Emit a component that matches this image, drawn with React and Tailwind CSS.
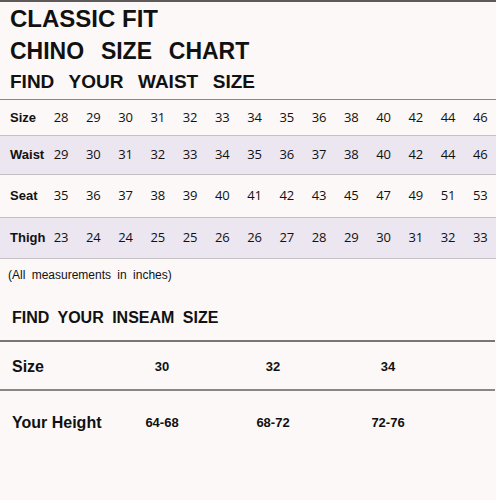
const waist = [
  { label: "Size", values: [28, 29, 30, 31, 32, 33, 34, 35, 36, 38, 40, 42, 44, 46], h: "h-[36px]", bg: "" },
  { label: "Waist", values: [29, 30, 31, 32, 33, 34, 35, 36, 37, 38, 40, 42, 44, 46], h: "h-[39px]", bg: "bg-[#ebe6f0]" },
  { label: "Seat", values: [35, 36, 37, 38, 39, 40, 41, 42, 43, 45, 47, 49, 51, 53], h: "h-[43px]", bg: "" },
  { label: "Thigh", values: [23, 24, 24, 25, 25, 26, 26, 27, 28, 29, 30, 31, 32, 33], h: "h-[41px]", bg: "bg-[#ebe6f0]" },
];

const inseam = [
  { label: "Size", values: ["30", "32", "34"], h: "h-[49px] pt-[3px]" },
  { label: "Your Height", values: ["64-68", "68-72", "72-76"], h: "h-[64px]" },
];

export default function App() {
  return (
    <div className="w-[496px] h-[500px] overflow-hidden bg-[#fbf8f7] text-[#111] border-t-2 border-[#5e5a5a] font-['Liberation_Sans',Arial,sans-serif]">
      <header className="pl-[10px] font-bold">
        <h1 className="text-[24px] leading-[32px] mt-[1px]">CLASSIC FIT</h1>
        <h2 className="text-[23px] leading-[32px] [word-spacing:2px]">CHINO&nbsp; SIZE&nbsp; CHART</h2>
        <h3 className="text-[19px] leading-[30px] [word-spacing:2px]">FIND&nbsp; YOUR&nbsp; WAIST&nbsp; SIZE</h3>
      </header>

      <div className="mt-[2px] border-t border-[#8a8686]">
        {waist.map((row) => (
          <div
            key={row.label}
            className={`grid grid-cols-[35px_repeat(14,32.25px)] items-center pl-[10px] border-b border-[#c4c0c4] ${row.h} ${row.bg}`}
          >
            <span className="font-bold text-[13px]">{row.label}</span>
            {row.values.map((v, i) => (
              <span key={i} className="text-center text-[13px] font-['Open_Sans',sans-serif]">
                {v}
              </span>
            ))}
          </div>
        ))}
      </div>

      <p className="pl-[8px] mt-[7px] text-[12px] [word-spacing:3px]">(All measurements in inches)</p>

      <h3 className="pl-[12px] mt-[24px] font-bold text-[16px] leading-[20px] [word-spacing:4px]">
        FIND YOUR INSEAM SIZE
      </h3>

      <div className="mt-[12px] border-t-2 border-[#7a7676] w-[495px]">
        {inseam.map((row, idx) => (
          <div
            key={row.label}
            className={`grid grid-cols-[100px_100px_122px_108px] items-center pl-[12px] ${row.h} ${idx === 0 ? "border-b-2 border-[#8a8686]" : ""}`}
          >
            <span className="font-bold text-[16px]">{row.label}</span>
            {row.values.map((v) => (
              <span key={v} className="text-center font-bold text-[13px]">
                {v}
              </span>
            ))}
          </div>
        ))}
      </div>
    </div>
  );
}
